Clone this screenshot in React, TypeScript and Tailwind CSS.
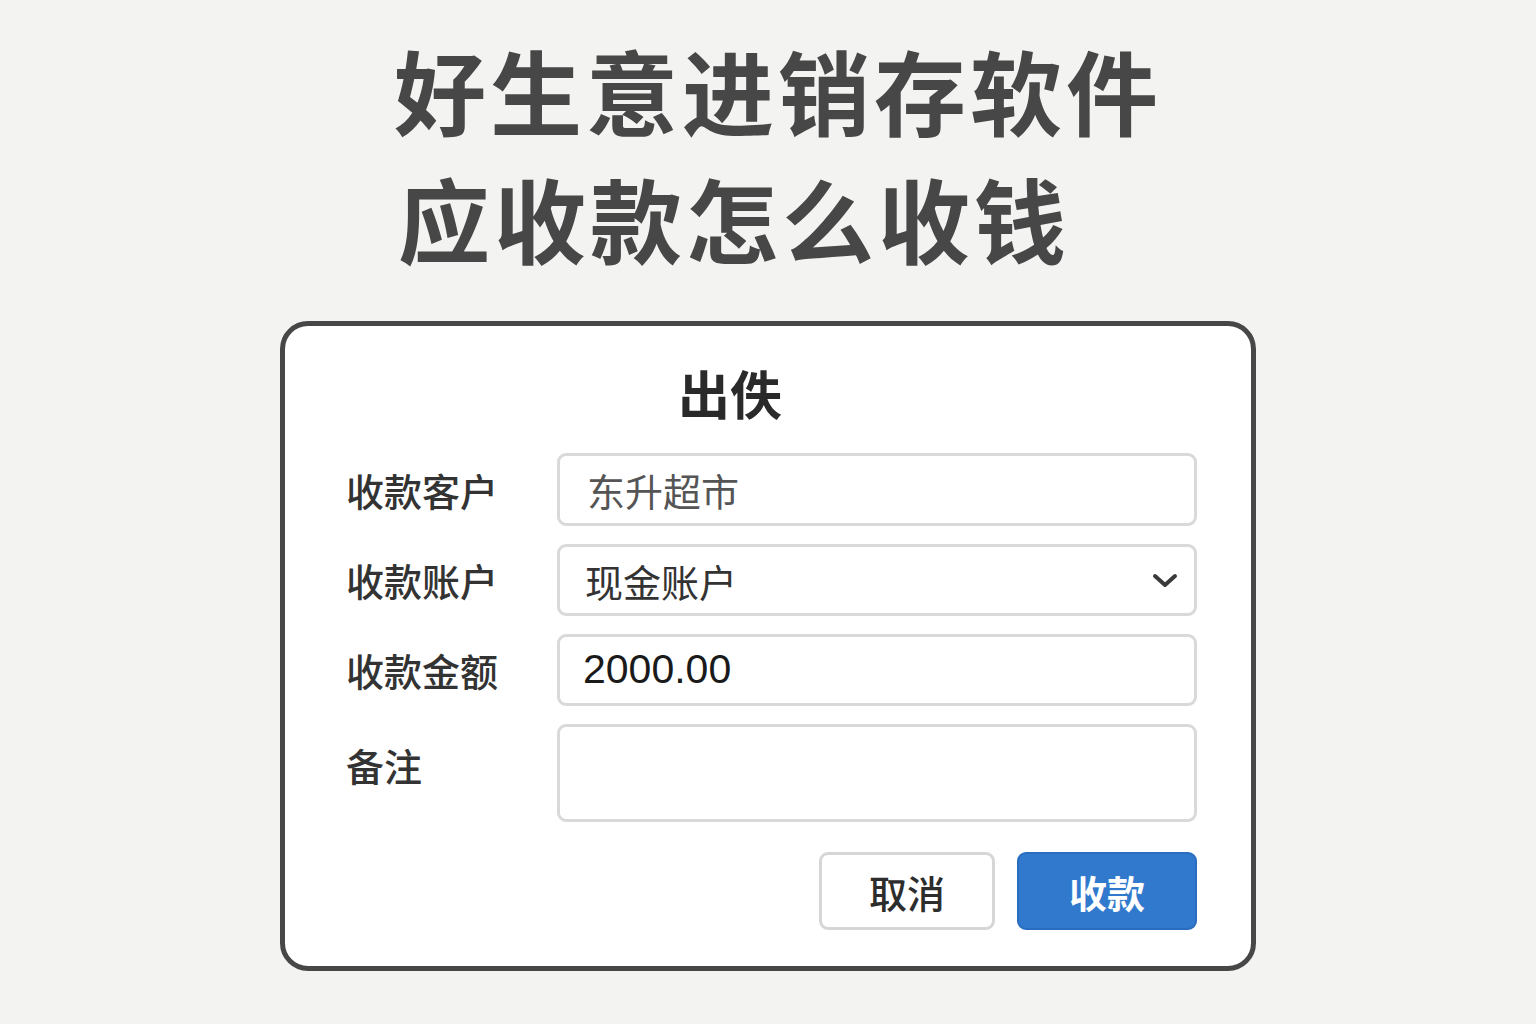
import React from "react";

const cjk = { fontFamily: '"Noto Sans CJK SC", "Noto Sans", sans-serif' };

function Row({ label, children, tall }: { label: string; children: React.ReactNode; tall?: boolean }) {
  return (
    <div className={`flex ${tall ? "items-start" : "items-center"}`}>
      <div
        className={`w-[211px] shrink-0 text-[38px] font-medium text-[#333] ${tall ? "pt-[17px] leading-[48px]" : "leading-[48px]"}`}
      >
        {label}
      </div>
      {children}
    </div>
  );
}

export default function App() {
  return (
    <div className="min-h-screen w-full bg-[#f3f3f1]" style={cjk}>
      <div className="pl-[394px] pt-[25px] text-[92px] font-bold leading-[128px] tracking-[4px] text-[#474747]">
        <div>好生意进销存软件</div>
        <div className="pl-[4px]">应收款怎么收钱</div>
      </div>

      <div className="mx-auto mt-[40px] h-[650px] w-[976px] rounded-[28px] border-[5px] border-[#474747] bg-white">
        <div className="pl-[393px] pt-[37px] text-[52px] font-bold leading-[60px] text-[#2a2a2a]">出佚</div>

        <div className="mt-[30px] flex flex-col gap-[18px] pl-[61px]">
          <Row label="收款客户">
            <div className="flex h-[73px] w-[640px] items-center rounded-[9px] border-[3px] border-[#d9d9d9] bg-white pl-[27px] text-[38px] text-[#555]">
              东升超市
            </div>
          </Row>
          <Row label="收款账户">
            <div className="flex h-[72px] w-[640px] items-center justify-between rounded-[9px] border-[3px] border-[#d9d9d9] bg-white pl-[25px] pr-[15px] text-[38px] text-[#333]">
              <span>现金账户</span>
              <svg width="28" height="18" viewBox="0 0 28 18" fill="none">
                <path d="M4 5 L14 14 L24 5" stroke="#3a3a3a" strokeWidth="4" strokeLinecap="round" strokeLinejoin="round" />
              </svg>
            </div>
          </Row>
          <Row label="收款金额">
            <div
              className="flex h-[72px] w-[640px] items-center rounded-[9px] border-[3px] border-[#d9d9d9] bg-white pl-[23px] text-[41px] text-[#1a1a1a]"
              style={{ fontFamily: '"Liberation Sans", Arial, sans-serif' }}
            >
              2000.00
            </div>
          </Row>
          <Row label="备注" tall>
            <div className="h-[98px] w-[640px] rounded-[9px] border-[3px] border-[#d9d9d9] bg-white" />
          </Row>
        </div>

        <div className="mt-[30px] flex justify-end gap-[22px] pr-[54px]">
          <button className="flex h-[78px] w-[176px] items-center justify-center rounded-[9px] border-[3px] border-[#d6d6d6] bg-white text-[38px] font-medium text-[#2d2d2d]">
            取消
          </button>
          <button className="flex h-[78px] w-[180px] items-center justify-center rounded-[9px] border-[2px] border-[#2a6dc0] bg-[#3079cd] text-[38px] font-bold text-white">
            收款
          </button>
        </div>
      </div>
    </div>
  );
}
